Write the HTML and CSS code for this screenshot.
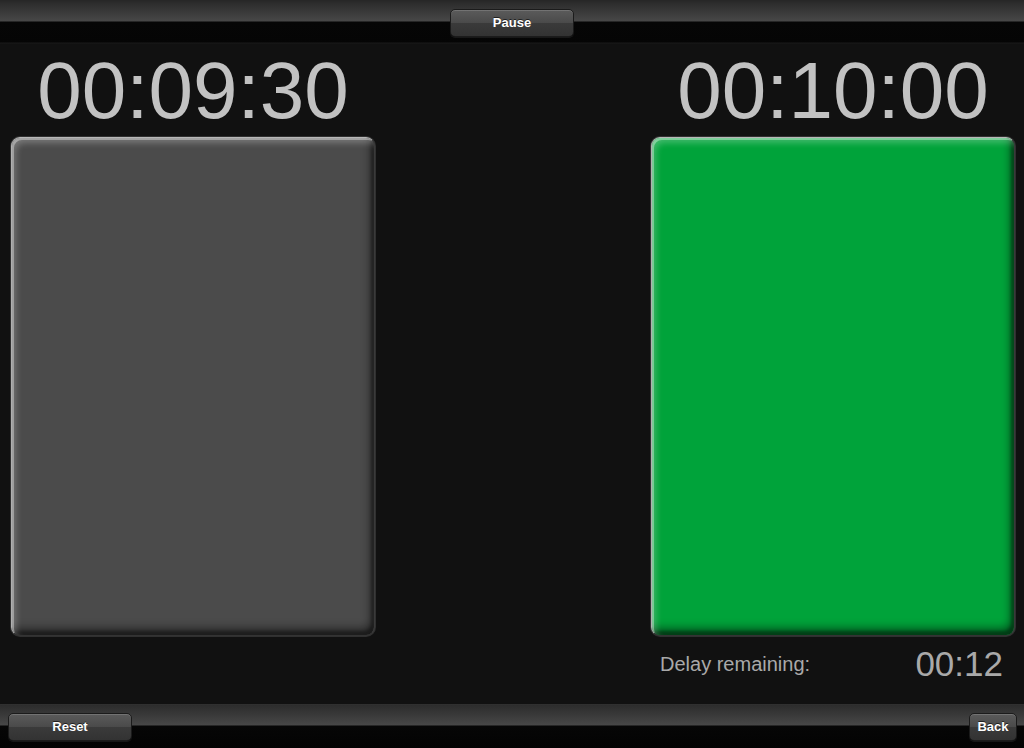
FILE: index.html
```html
<!doctype html>
<html>
  <head>
    <title>Chess Clock</title>
    <link rel="stylesheet" href="styles.css">
  </head>
  <body>
    <div class="toolbar toolbar-top">
      <button class="bar-btn btn-pause" id="btn-pause">Pause</button>
    </div>

    <main class="board">
      <section class="player">
        <div class="clock">00:09:30</div>
        <div class="pad pad-idle"></div>
      </section>

      <section class="player">
        <div class="clock">00:10:00</div>
        <div class="pad pad-active"></div>
        <div class="delay">
          <span class="delay-label">Delay remaining:</span>
          <span class="delay-value">00:12</span>
        </div>
      </section>
    </main>

    <div class="toolbar toolbar-bottom">
      <button class="bar-btn btn-reset" id="btn-reset">Reset</button>
      <button class="bar-btn btn-back" id="btn-back">Back</button>
    </div>
  </body>
</html>
```

FILE: styles.css
```css
html, body {
  margin: 0;
  height: 100%;
}
body {
  font-family: "Liberation Sans", Arial, sans-serif;
  background-color: #111;
  display: flex;
  flex-direction: column;
  width: 1024px;
  height: 748px;
  overflow: hidden;
}

/* barras superior e inferior */
.toolbar {
  height: 44px;
  flex: none;
  display: flex;
  align-items: flex-start;
  padding-top: 9px;
  box-sizing: border-box;
  background: linear-gradient(to bottom, #262626 0, #2e2e2e 4px, #474747 21px, #060606 22px, #050505 42px, #1a1a1a 43px, #111 44px);
}
.toolbar-top { justify-content: center; }
.toolbar-bottom {
  justify-content: space-between;
  padding-left: 8px;
  padding-right: 7px;
  background: linear-gradient(to bottom, #333 0, #2c2c2c 1px, #474747 21px, #060606 22px, #030303 44px);
}
.bar-btn {
  height: 28px;
  padding: 0 0 1px;
  font-family: "Liberation Sans", Arial, sans-serif;
  font-weight: bold;
  font-size: 13px;
  color: #fff;
  text-shadow: 0 -1px 0 rgba(0, 0, 0, 0.6);
  border: 1px solid #1b1b1b;
  border-radius: 5px;
  background: linear-gradient(to bottom, #5b5b5b 0, #4a4a4a 50%, #3a3a3a 51%, #333 100%);
  box-shadow: inset 0 1px 0 rgba(255, 255, 255, 0.15), 0 1px 0 rgba(255, 255, 255, 0.08);
  cursor: pointer;
}
.btn-pause { width: 124px; }
.btn-reset { width: 124px; }
.btn-back { width: 48px; }

/* zona de relojes */
.board {
  flex: 1;
  display: flex;
  justify-content: space-between;
  padding: 0 9px 0 11px;
}
.player {
  width: 364px;
  display: flex;
  flex-direction: column;
}
.clock {
  height: 93px;
  line-height: 93px;
  font-size: 80px;
  color: #c2c2c2;
  text-align: center;
}
.pad {
  height: 499px;
  box-sizing: border-box;
  border-radius: 9px;
  border: 1px solid;
  border-color: #b8b8b8 #3a3a3a #333 #b0b0b0;
  box-shadow:
    inset 2px 2px 0 rgba(255, 255, 255, 0.35),
    inset 4px 5px 6px rgba(255, 255, 255, 0.25),
    inset -3px -4px 3px rgba(0, 0, 0, 0.35),
    inset -4px -7px 8px rgba(0, 0, 0, 0.45),
    0 0 0 1px rgba(80, 80, 80, 0.5);
}
.pad-idle { background-color: #4b4b4b; }
.pad-active { background-color: #00a33a; }

.delay {
  display: flex;
  justify-content: space-between;
  align-items: flex-start;
  padding: 10px 12px 0 9px;
  color: #a9a9a9;
}
.delay-label {
  font-size: 20px;
  line-height: 20px;
  margin-top: 8px;
}
.delay-value {
  font-size: 35px;
  line-height: 35px;
}
```
